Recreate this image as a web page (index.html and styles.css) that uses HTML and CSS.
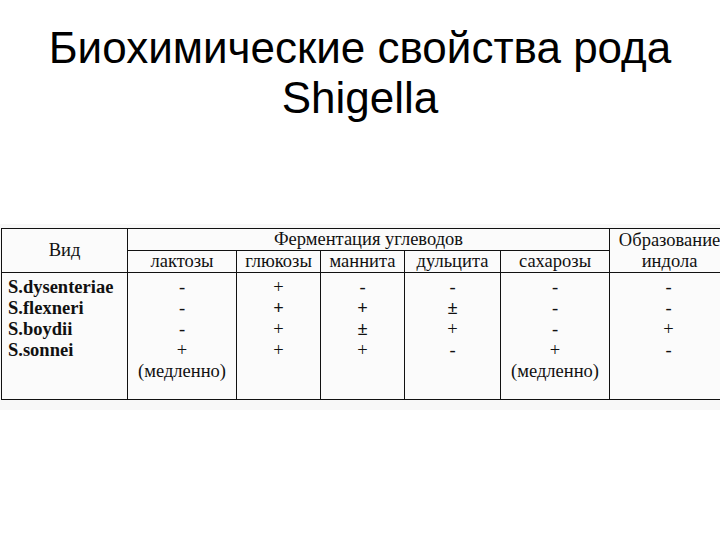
FILE: index.html
```html
<!DOCTYPE html>
<html lang="ru">
<head>
<meta charset="utf-8">
<title>Биохимические свойства рода Shigella</title>
<link rel="stylesheet" href="styles.css">
</head>
<body>
<div class="slide">
  <h1 class="title">Биохимические свойства рода<br>Shigella</h1>
  <div class="table-wrap">
    <table class="bio">
      <colgroup>
        <col class="c-vid">
        <col class="c-lak">
        <col class="c-glu">
        <col class="c-man">
        <col class="c-dul">
        <col class="c-sah">
        <col class="c-ind">
      </colgroup>
      <tr class="h1">
        <td rowspan="2">Вид</td>
        <td colspan="5">Ферментация углеводов</td>
        <td rowspan="2" class="ind-head">Образование<br>индола</td>
      </tr>
      <tr class="h2">
        <td>лактозы</td>
        <td>глюкозы</td>
        <td>маннита</td>
        <td>дульцита</td>
        <td>сахарозы</td>
      </tr>
      <tr class="data">
        <td class="species">S.dysenteriae<br>S.flexneri<br>S.boydii<br>S.sonnei</td>
        <td>-<br>-<br>-<br>+<br>(медленно)</td>
        <td>+<br><b>+</b><br>+<br>+</td>
        <td>-<br><b>+</b><br><b>±</b><br>+</td>
        <td>-<br><b>±</b><br>+<br>-</td>
        <td>-<br>-<br>-<br>+<br>(медленно)</td>
        <td>-<br>-<br>+<br>-</td>
      </tr>
    </table>
  </div>
</div>
</body>
</html>
```
FILE: styles.css
```css
html, body {
  margin: 0;
  padding: 0;
  background: #ffffff;
  width: 720px;
  height: 540px;
  overflow: hidden;
}

.slide {
  width: 720px;
  height: 540px;
  overflow: hidden;
}

.title {
  margin: 0;
  padding-top: 23px;
  font-family: "Liberation Sans", Arial, sans-serif;
  font-weight: normal;
  font-size: 44px;
  line-height: 50px;
  text-align: center;
  color: #000;
}

.table-wrap {
  margin-top: 101px;
  padding: 4px 0 10px 1px;
  background: #f8f8f8;
  width: 760px;
}

.bio {
  border-collapse: collapse;
  table-layout: fixed;
  width: 726px;
  background: #fbfbfb;
  font-family: "Liberation Serif", "Times New Roman", serif;
  font-size: 18.5px;
  line-height: 21px;
  color: #111;
}

.bio td {
  border: 1px solid #111;
  padding: 0;
  text-align: center;
  vertical-align: middle;
  white-space: nowrap;
  overflow: visible;
}

.c-vid { width: 126px; }
.c-lak { width: 109px; }
.c-glu { width: 84px; }
.c-man { width: 84px; }
.c-dul { width: 96px; }
.c-sah { width: 109px; }
.c-ind { width: 118px; }

.h1 td { height: 21px; }
.h2 td { height: 21px; }

.bio .ind-head {
  padding-left: 2px;
}

.data td {
  vertical-align: top;
  height: 122px;
  padding-top: 4px;
}

.bio .species {
  text-align: left;
  padding-left: 6px;
  font-weight: bold;
}

.data b {
  font-weight: bold;
}
```
